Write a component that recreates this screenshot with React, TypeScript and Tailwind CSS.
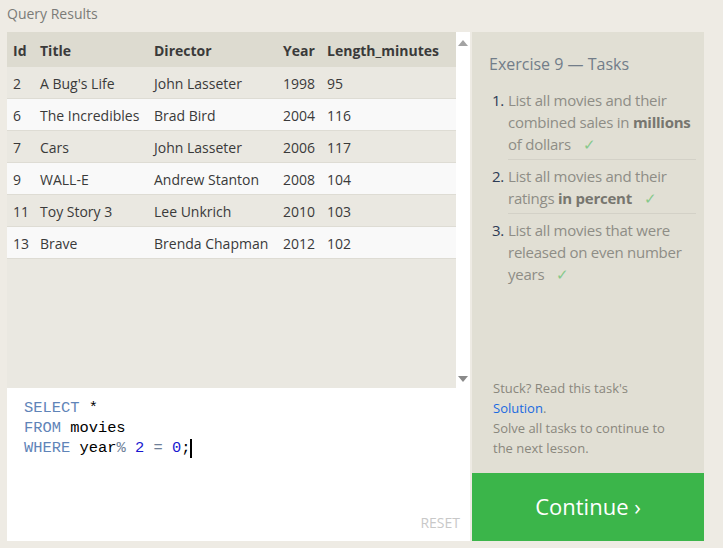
const rows = [
    { id: 2, title: "A Bug's Life", director: 'John Lasseter', year: 1998, len: 95 },
    { id: 6, title: 'The Incredibles', director: 'Brad Bird', year: 2004, len: 116 },
    { id: 7, title: 'Cars', director: 'John Lasseter', year: 2006, len: 117 },
    { id: 9, title: 'WALL-E', director: 'Andrew Stanton', year: 2008, len: 104 },
    { id: 11, title: 'Toy Story 3', director: 'Lee Unkrich', year: 2010, len: 103 },
    { id: 13, title: 'Brave', director: 'Brenda Chapman', year: 2012, len: 102 },
];

const cols = 'grid grid-cols-[27px_114px_129px_44px_1fr] pl-[6px] pt-[1px] items-center';

const Check = () => <span className="ml-3 text-[#86c98b]">✓</span>;

const App = () => {
    return (
        <div
            className="w-[723px] h-[548px] bg-[#eeebe4] text-[#3a3a3a] overflow-hidden"
            style={{ fontFamily: '"Open Sans", "Noto Sans", sans-serif' }}
        >
            <div className="h-[32px] pl-[7px] pt-[3px] text-[14px] text-[#7b7b78]">Query Results</div>
            <div className="flex pl-[7px]">
                {/* left column: results + editor */}
                <div className="w-[463px] flex flex-col">
                    <div className="flex h-[356px]">
                        <div className="w-[449px] bg-[#eae8e1] text-[14px]">
                            <div className={`${cols} h-[35px] bg-[#dddbd0] font-bold text-[#3a3a3a]`}>
                                <div>Id</div>
                                <div>Title</div>
                                <div>Director</div>
                                <div>Year</div>
                                <div>Length_minutes</div>
                            </div>
                            {rows.map((r, i) => (
                                <div
                                    key={r.id}
                                    className={`${cols} h-[32px] border-b border-[#dedcd4] ${i % 2 === 0 ? 'bg-[#eae8e1]' : 'bg-[#f9f9f9]'}`}
                                >
                                    <div>{r.id}</div>
                                    <div>{r.title}</div>
                                    <div>{r.director}</div>
                                    <div>{r.year}</div>
                                    <div>{r.len}</div>
                                </div>
                            ))}
                        </div>
                        <div className="w-[14px] bg-white flex flex-col items-center justify-between pt-[8px] pb-[6px]">
                            <div className="w-0 h-0 border-l-[5px] border-r-[5px] border-b-[6px] border-l-transparent border-r-transparent border-b-[#a3a3a3]" />
                            <div className="w-0 h-0 border-l-[5px] border-r-[5px] border-t-[6px] border-l-transparent border-r-transparent border-t-[#8a8a8a]" />
                        </div>
                    </div>
                    <div className="h-[153px] bg-white flex flex-col justify-between pl-[17px] pr-[10px] pt-[10px] pb-[8px]">
                        <div
                            className="text-[15.4px] leading-[20px] text-black"
                            style={{ fontFamily: '"Liberation Mono", "DejaVu Sans Mono", monospace' }}
                        >
                            <div>
                                <span className="text-[#5f84b8]">SELECT</span> *
                            </div>
                            <div>
                                <span className="text-[#5f84b8]">FROM</span> movies
                            </div>
                            <div className="flex items-center">
                                <span className="text-[#5f84b8]">WHERE</span>&nbsp;year
                                <span className="text-[#6f7f98]">%</span>&nbsp;
                                <span className="text-[#1818d0]">2</span>&nbsp;
                                <span className="text-[#6f7f98]">=</span>&nbsp;
                                <span className="text-[#1818d0]">0</span>;
                                <span className="inline-block w-[2px] h-[19px] bg-black" />
                            </div>
                        </div>
                        <div className="self-end text-[14px] text-[#c8c8c8]">RESET</div>
                    </div>
                </div>

                {/* right column: tasks */}
                <div className="ml-[2px] w-[232px] h-[509px] flex flex-col">
                    <div className="flex-1 bg-[#e1dfd4] flex flex-col justify-between pl-[17px] pr-[2px] pt-[20px] pb-[15px]">
                        <div>
                            <div className="text-[16px] text-[#727d89]">Exercise 9 — Tasks</div>
                            <ol className="mt-[13px] text-[15px] leading-[22px] tracking-[-0.25px] text-[#8e8d86]">
                                <li className="flex">
                                    <span className="w-[19px] shrink-0 text-right pr-[4px] text-[#2d3b55]">1.</span>
                                    <span className="flex-1 border-b border-[#d3d1c7] pb-[4px] mr-[6px]">
                                        List all movies and their combined sales in{' '}
                                        <b className="text-[#77766f]">millions</b> of dollars
                                        <Check />
                                    </span>
                                </li>
                                <li className="flex pt-[5px]">
                                    <span className="w-[19px] shrink-0 text-right pr-[4px] text-[#2d3b55]">2.</span>
                                    <span className="flex-1 border-b border-[#d3d1c7] pb-[4px] mr-[6px]">
                                        List all movies and their ratings{' '}
                                        <b className="text-[#77766f]">in percent</b>
                                        <Check />
                                    </span>
                                </li>
                                <li className="flex pt-[5px]">
                                    <span className="w-[19px] shrink-0 text-right pr-[4px] text-[#2d3b55]">3.</span>
                                    <span className="flex-1 mr-[6px]">
                                        List all movies that were released on even number years
                                        <Check />
                                    </span>
                                </li>
                            </ol>
                        </div>
                        <div className="pl-[4px] pr-[34px] text-[13px] leading-[20px] text-[#8a877d]">
                            Stuck? Read this task's
                            <br />
                            <span className="text-[#1a6ae0]">Solution</span>.
                            <br />
                            Solve all tasks to continue to the next lesson.
                        </div>
                    </div>
                    <div className="h-[68px] bg-[#3bb54a] flex items-center justify-center text-white text-[22px] pb-[1px]">
                        Continue ›
                    </div>
                </div>
            </div>
        </div>
    );
};

export default App;
